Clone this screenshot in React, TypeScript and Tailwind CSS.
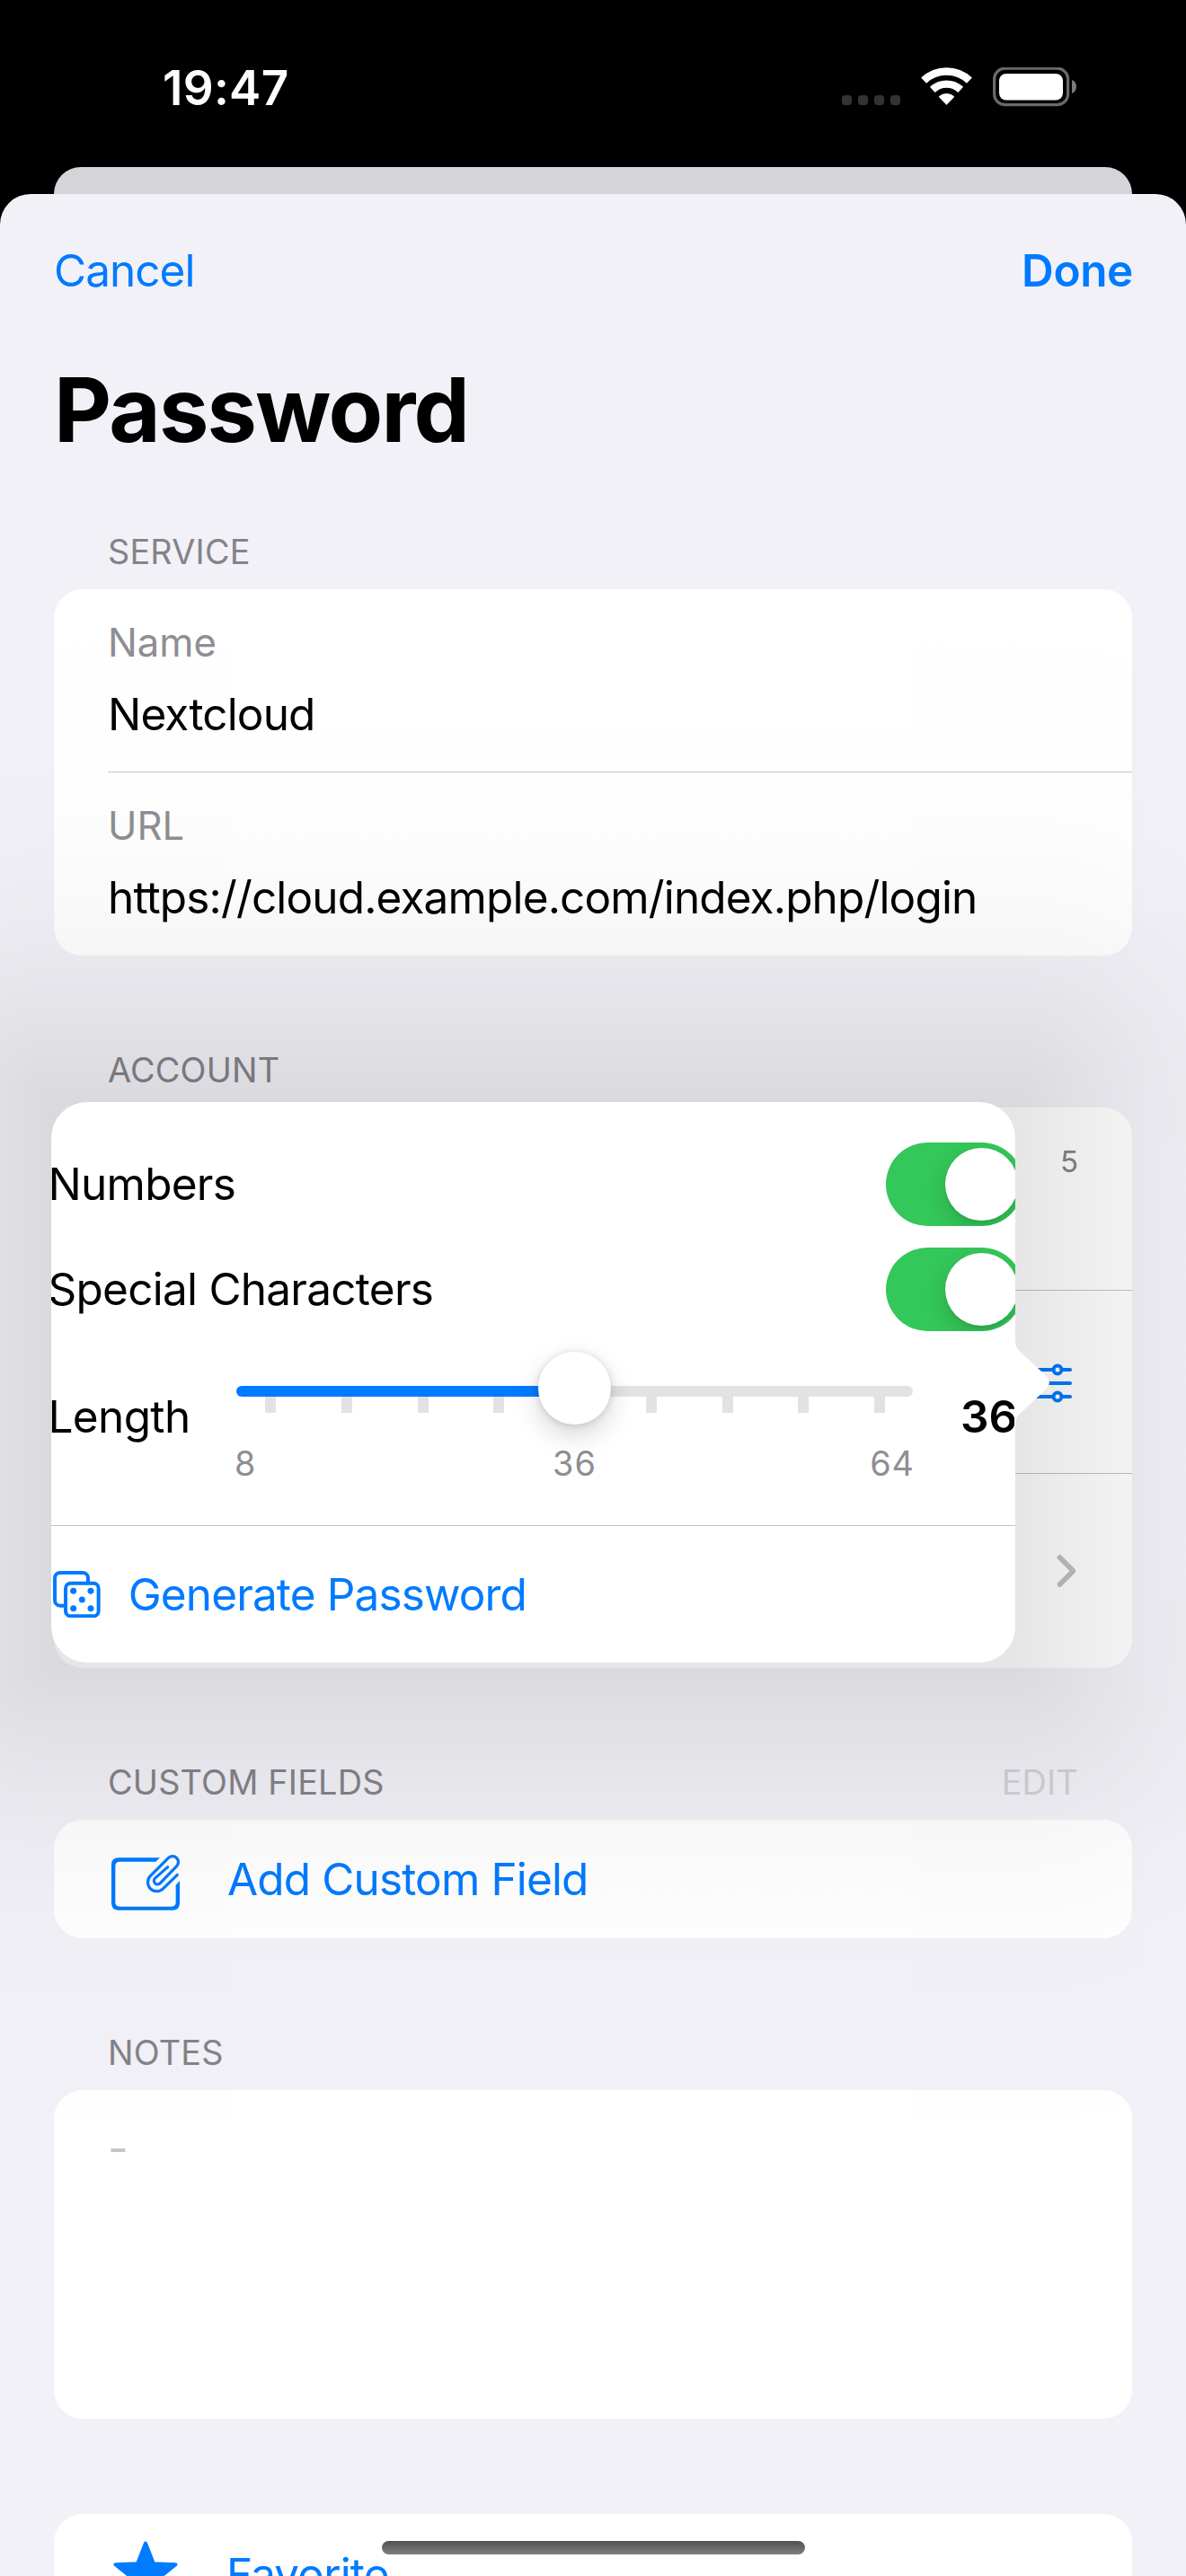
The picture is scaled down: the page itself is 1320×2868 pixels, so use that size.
import React from 'react';

const body = 'text-[49.5px] tracking-[-0.86px] whitespace-nowrap';

function StatusBar() {
  return (
    <div className="h-[186px] shrink-0 flex items-start justify-between pl-[181px] pr-[122px] text-white">
      <div className="mt-[68px] leading-[60px] text-[53px] font-semibold tracking-[0.3px]">19:47</div>
      <div className="mt-[75px] flex items-start">
        <div className="mt-[31px] flex gap-[7px]">
          {[0, 1, 2, 3].map((i) => (
            <span key={i} className="w-[11px] h-[11px] rounded-[3.5px] bg-[#333333]" />
          ))}
        </div>
        <svg className="ml-[23px] w-[57px] h-[43px]" viewBox="0 0 57 43" fill="none" stroke="#fff">
          <path d="M3.1 14.6A37 37 0 0 1 53.9 14.6" strokeWidth="8.6" />
          <path d="M12.8 24.9A22.8 22.8 0 0 1 44.2 24.9" strokeWidth="8.4" />
          <path d="M20.8 32.6A12 12 0 0 1 36.2 32.6L28.5 40.8Z" fill="#fff" strokeWidth="1.6" strokeLinejoin="round" />
        </svg>
        <svg className="ml-[23px] w-[93px] h-[44px]" viewBox="0 0 93 44" fill="none">
          <rect x="1.6" y="1.1" width="82" height="40.6" rx="12" stroke="#6a6a6a" strokeWidth="3.2" />
          <rect x="7" y="7" width="71" height="29.5" rx="8" fill="#fff" />
          <path d="M88 14C91.500 15.500 93 18 93 21.500S91.500 27.500 88 29Z" fill="#7a7a7a" />
        </svg>
      </div>
    </div>
  );
}

function SectionHeader({ title, action, className }: { title: string; action?: string; className: string }) {
  return (
    <div className={`flex h-[84px] items-center justify-between px-[120px] text-[37.8px] tracking-[0.2px] text-[#848389] ${className}`}>
      <span>{title}</span>
      {action && <span className="text-[#d2d1d7]">{action}</span>}
    </div>
  );
}

function Field({ label, value }: { label: string; value: string }) {
  return (
    <div className="pt-[30px] h-[203px]">
      <div className="leading-[60px] text-[43.6px] text-[#8e8e93]">{label}</div>
      <div className={`leading-[98px] ${body}`}>{value}</div>
    </div>
  );
}

function Toggle() {
  return (
    <div className="flex h-[93px] w-[153px] items-center justify-end rounded-full bg-[#34c759] pr-[6px] overflow-hidden">
      <div className="size-[81px] rounded-full bg-white shadow-[0_9px_24px_rgba(0,0,0,0.16),0_3px_3px_rgba(0,0,0,0.06)]" />
    </div>
  );
}

function ToggleRow({ label }: { label: string }) {
  return (
    <div className="flex h-[93px] items-center justify-between text-[49.5px] tracking-[-0.75px]">
      <span>{label}</span>
      <Toggle />
    </div>
  );
}

function LengthSlider() {
  return (
    <div className="w-[753px] shrink-0">
      <div className="relative h-[82px] pt-[38px]">
        <div className="h-[12px] rounded-full bg-[#e3e3e4] overflow-hidden">
          <div className="h-full w-1/2 bg-[#007aff]" />
        </div>
        <div className="flex justify-between pl-[32px] pr-[31px]">
          {Array.from({ length: 9 }, (_, i) => (
            <span key={i} className="h-[18px] w-[12px] bg-[#e2e2e3]" />
          ))}
        </div>
        <div className="absolute left-[336px] top-0 size-[81px] rounded-full bg-white shadow-[0_12px_30px_rgba(0,0,0,0.16),0_1px_8px_rgba(0,0,0,0.14)]" />
      </div>
      <div className="mt-[18px] -mx-[2px] grid grid-cols-3 text-[37.8px] leading-[48px] tracking-[1px] text-[#8e8e93]">
        <span>8</span>
        <span className="text-center">36</span>
        <span className="text-right">64</span>
      </div>
    </div>
  );
}

function DiceIcon() {
  return (
    <svg className="w-[52.7px] h-[52.3px]" viewBox="87 146 158 157" fill="none" stroke="#007aff" strokeWidth="12">
      <path d="M128 262H111A18 18 0 0 1 93 244V170A18 18 0 0 1 111 152H186A18 18 0 0 1 204 170V184" />
      <rect x="129" y="187" width="110" height="110" rx="17" />
      <g fill="#007aff" stroke="none">
        <circle cx="155" cy="213" r="10.500" />
        <circle cx="213" cy="213" r="10.500" />
        <circle cx="184" cy="242" r="10.500" />
        <circle cx="155" cy="271" r="10.500" />
        <circle cx="213" cy="271" r="10.500" />
      </g>
    </svg>
  );
}

function AddFieldIcon() {
  return (
    <svg className="mt-[8px] w-[80px] h-[68px]" viewBox="36 36 240 204" fill="none" stroke="#007aff">
      <path d="M204 55L190 68H70Q55 68 55 83V204Q55 218 70 218H242Q257 218 257 204V146L270 132V206Q270 230 246 230H66Q42 230 42 206V79Q42 55 66 55Z" fill="#007aff" stroke="none" />
      <path d="M262 112L215 158A30 30 0 0 1 172 116L232 56A19 19 0 0 1 260 83L205 140A12 12 0 0 1 187 124L230 86" strokeWidth="9.500" strokeLinecap="round" strokeLinejoin="round" />
    </svg>
  );
}

/* Gaussian falloff by distance from the popover's edge, as gradient stops. */
function falloffStops(reach: number, sigma: number) {
  const tail = (z: number) => 1 / (1 + Math.exp(1.5976 * z + 0.07056 * z * z * z));
  const stops: string[] = [];
  for (let d = 0; d <= reach; d += 20) {
    const a = d === reach ? 0 : 2 * tail(d / sigma);
    stops.push(`rgba(0,0,0,${a.toFixed(4)}) ${d}px`);
  }
  return stops.join(', ');
}

function PopoverShadow() {
  const stops = falloffStops(520, 180);
  const cells = [
    `radial-gradient(circle at bottom right, ${stops})`,
    `linear-gradient(to top, ${stops})`,
    `radial-gradient(circle at bottom left, ${stops})`,
    `linear-gradient(to left, ${stops})`,
    'linear-gradient(#000, #000)',
    `linear-gradient(to right, ${stops})`,
    `radial-gradient(circle at top right, ${stops})`,
    `linear-gradient(to bottom, ${stops})`,
    `radial-gradient(circle at top left, ${stops})`,
  ];
  return (
    <div className="pointer-events-none absolute left-[-463px] top-[491px] grid grid-cols-[520px_1073px_520px] grid-rows-[520px_624px_520px] opacity-[0.094]">
      {cells.map((backgroundImage, i) => (
        <div key={i} style={{ backgroundImage }} />
      ))}
    </div>
  );
}

function Popover() {
  return (
    <div className="absolute left-[57px] top-[1011px] h-[624px] w-[1073px] rounded-[40px] bg-white">
      <svg className="absolute left-[1072px] top-[264px] w-[39px] h-[97px]" viewBox="-1 0 39 97">
        <path d="M-1 0H0C0 7 1.500 10 5 13.500L34 40.500Q37.800 44.500 37.800 48.300Q37.800 52 34 56L5 83C1.500 86.500 0 89.500 0 96.500H-1Z" fill="#fff" />
      </svg>
      <div className="h-full overflow-hidden rounded-[40px] pt-[45px]">
        <div className="-ml-[3.5px] w-[1085.5px]">
          <ToggleRow label="Numbers" />
          <div className="h-[24px]" />
          <ToggleRow label="Special Characters" />
          <div className="mt-[23px] flex h-[144px] items-start">
            <div className="w-[209.5px] shrink-0 leading-[144px] text-[49.5px] tracking-[-0.65px]">Length</div>
            <LengthSlider />
            <div className="ml-[53px] leading-[144px] text-[49.5px] font-semibold">36</div>
          </div>
        </div>
        <div className="mt-[49px] h-px bg-[#c2c2c4]" />
        <div className={`flex h-[152px] items-center pl-[2px] text-[#007aff] ${body}`}>
          <DiceIcon />
          <span className="ml-[31px]">Generate Password</span>
        </div>
      </div>
    </div>
  );
}

function AccountCard() {
  return (
    <div className="mx-[60px] h-[624px] rounded-[32px] bg-white pl-[60px] text-[#8e8e93]">
      <div className="flex h-[204px] items-start justify-end border-b border-[#c2c2c4] pr-[60px] pt-[30px] text-[33px] leading-[60px] text-[#848488]">
        5
      </div>
      <div className="flex h-[204px] items-center justify-end border-b border-[#c2c2c4] pr-[67px]">
        <svg className="mt-[2px] w-[52px] h-[44px]" viewBox="0 0 52 44" fill="none" stroke="#007aff" strokeWidth="4" strokeLinecap="round">
          <path d="M2 7H31M41 7H50M2 22H12M21 22H50M2 37H31M41 37H50" />
          <circle cx="36" cy="7" r="4.500" />
          <circle cx="16.500" cy="22" r="4.500" />
          <circle cx="36" cy="37" r="4.500" />
        </svg>
      </div>
      <div className="flex h-[216px] items-center justify-end pr-[62px]">
        <svg className="w-[22px] h-[38px]" viewBox="0 0 22 38" fill="none" stroke="#c0c0c2" strokeWidth="5.500" strokeLinecap="round" strokeLinejoin="round">
          <path d="M3.500 4L18.500 19L3.500 34" />
        </svg>
      </div>
    </div>
  );
}

export default function App() {
  return (
    <div className="relative flex h-[2868px] w-[1320px] flex-col overflow-hidden bg-black font-['Inter',sans-serif] text-black">
      <StatusBar />
      <div className="mx-[60px] h-[30px] shrink-0 rounded-t-[30px] bg-[#d5d4d9]" />
      <div className="relative h-[2652px] overflow-hidden rounded-t-[34px] bg-[#f2f1f7]">
        <div className="flex h-[170px] items-center justify-between px-[60px] text-[49.5px] text-[#007aff]">
          <span className="tracking-[-0.97px]">Cancel</span>
          <span className="-mr-px font-semibold tracking-[-0.39px]">Done</span>
        </div>
        <h1 className="pl-[60px] text-[99px] font-bold leading-[140px] tracking-[-1.73px]">Password</h1>

        <SectionHeader title="SERVICE" className="mt-[46px]" />
        <div className="mx-[60px] h-[408px] rounded-[32px] bg-white pl-[60px]">
          <Field label="Name" value="Nextcloud" />
          <div className="h-px bg-[#c6c6c8]" />
          <Field label="URL" value="https://cloud.example.com/index.php/login" />
        </div>

        <SectionHeader title="ACCOUNT" className="mt-[85px]" />
        <AccountCard />

        <SectionHeader title="CUSTOM FIELDS" action="EDIT" className="mt-[85px]" />
        <div className={`mx-[60px] flex h-[132px] items-center rounded-[32px] bg-white pl-[62px] text-[#007aff] ${body}`}>
          <AddFieldIcon />
          <span className="ml-[51px]">Add Custom Field</span>
        </div>

        <SectionHeader title="NOTES" className="mt-[85px]" />
        <div className="mx-[60px] h-[366px] rounded-[32px] bg-white pl-[60px] pt-[30px] text-[49.5px] leading-[68px] text-[#c5c5c7]">
          -
        </div>

        <div className={`mx-[60px] mt-[106px] flex h-[134px] items-center rounded-[32px] bg-white pl-[64px] text-[#007aff] ${body}`}>
          <svg className="w-[76px] h-[76px]" viewBox="-38 -38 76 76" fill="#007aff" stroke="#007aff" strokeWidth="4" strokeLinejoin="round">
            <path d="M0 -34.500L8.900 -11.700L33.500 -10.800L14.300 4.600L20.700 28.300L0 14.900L-20.700 28.300L-14.300 4.600L-33.500 -10.800L-8.900 -11.700Z" />
          </svg>
          <span className="ml-[52px]">Favorite</span>
        </div>

        <PopoverShadow />
        <Popover />
        <div className="absolute left-[425px] top-[2613px] h-[15px] w-[471px] rounded-full bg-linear-to-b from-[#505050] to-[#808080]" />
      </div>
    </div>
  );
}
